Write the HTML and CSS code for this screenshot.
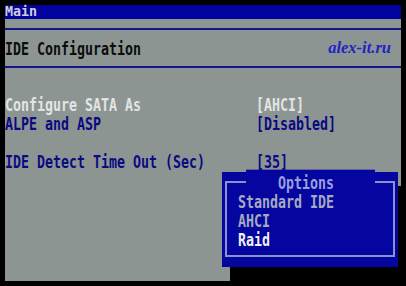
FILE: index.html
```html
<!DOCTYPE html>
<html>
<head>
<meta charset="utf-8">
<link rel="stylesheet" href="styles.css">
</head>
<body>
<div class="screen">
  <div class="menubar"><span class="tab">Main</span></div>
  <div class="header">
    <div class="row-text title-main">IDE Configuration</div>
    <div class="brand">alex-it.ru</div>
  </div>
  <div class="rows">
    <div class="row light"><span class="label">Configure SATA As</span><span class="value">[AHCI]</span></div>
    <div class="row dark"><span class="label">ALPE and ASP</span><span class="value">[Disabled]</span></div>
    <div class="row"></div>
    <div class="row dark"><span class="label">IDE Detect Time Out (Sec)</span><span class="value">[35]</span></div>
  </div>
  <div class="popup">
    <div class="frame">
      <div class="ptitle"><span class="ptitle-text">Options</span></div>
      <div class="item dim">Standard IDE</div>
      <div class="item dim">AHCI</div>
      <div class="item sel">Raid</div>
    </div>
  </div>
</div>
</body>
</html>
```
FILE: styles.css
```css
html, body {
  margin: 0;
  padding: 0;
  background: #000;
  width: 406px;
  height: 286px;
  overflow: hidden;
}
.screen {
  position: relative;
  margin: 5px 0 0 5px;
  width: 396px;
  height: 276px;
  background: #8d9593;
  font-family: "DejaVu Sans Mono", monospace;
  font-weight: bold;
  font-size: 13.29px;
}
.menubar {
  height: 14px;
  line-height: 14px;
  background: #0202a0;
}
.tab {
  color: #d0d0dc;
}
.header {
  margin-top: 9px;
  height: 36px;
  border-top: 2px solid #14148a;
  border-bottom: 2px solid #14148a;
  display: flex;
  align-items: center;
  justify-content: space-between;
  padding-right: 10px;
}
.title-main {
  color: #0c0c0c;
  line-height: 19px;
  transform: scaleY(1.35);
}
.brand {
  font-family: "Liberation Serif", serif;
  font-style: italic;
  font-weight: bold;
  font-size: 16.5px;
  color: #2222c4;
  margin-top: -1px;
}
.rows {
  margin-top: 27px;
  display: flex;
  flex-direction: column;
}
.row {
  height: 19px;
  line-height: 19px;
  display: flex;
  transform: scaleY(1.35);
}
.label {
  width: 251px;
  white-space: nowrap;
}
.light { color: #e2e4e4; }
.dark { color: #0a0a82; }
.popup {
  position: absolute;
  left: 217px;
  top: 167px;
  width: 176px;
  height: 95px;
  background: #0505a0;
  box-shadow: 8px 14px 0 #000;
  box-sizing: border-box;
  padding-top: 9px;
}
.frame {
  margin: 0 3px;
  height: 76px;
  box-sizing: border-box;
  border: 2px solid #8a92cc;
}
.ptitle {
  height: 19px;
  margin-top: -10.5px;
  line-height: 19px;
}
.ptitle-text {
  display: inline-block;
  margin-left: 19px;
  padding: 0 41px 0 32px;
  background: #0505a0;
  color: #9aa0dc;
  transform: scaleY(1.35);
}
.item {
  height: 19px;
  line-height: 19px;
  padding-left: 11px;
  transform: scaleY(1.35);
}
.dim { color: #a6aac0; }
.sel { color: #f0f0f4; }
```
